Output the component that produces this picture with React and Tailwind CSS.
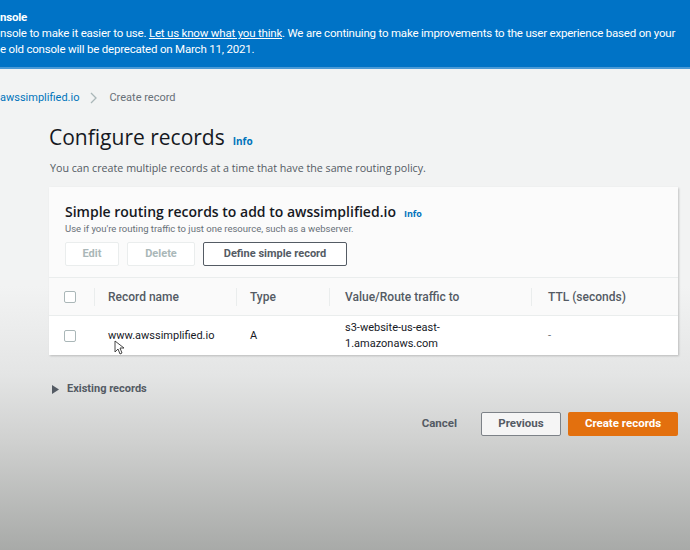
import React from "react";

function Checkbox() {
  return <div className="h-[12px] w-[12px] rounded-[2px] border border-[#aab7b8] bg-white" />;
}

export default function App() {
  return (
    <div className="relative h-[550px] w-[690px] overflow-hidden bg-[linear-gradient(to_bottom,#f2f3f3_0%,#f2f3f3_52%,#e4e5e5_68%,#d0d1d0_80%,#a8aaa8_100%)] font-['Open_Sans',sans-serif] text-[#16191f]">
      {/* Banner */}
      <div className="h-[69px] border-b-2 border-[#4a9ad6] bg-[#0073c6] pt-[9px] font-['Roboto',sans-serif] text-[11.5px] leading-[16px] tracking-[-0.2px] text-white">
        <div className="font-bold">nsole</div>
        <div className="whitespace-nowrap">
          nsole to make it easier to use. <span className="underline">Let us know what you think</span>. We are continuing to make improvements to the user experience based on your
        </div>
        <div className="whitespace-nowrap">e old console will be deprecated on March 11, 2021.</div>
      </div>

      {/* Breadcrumb */}
      <div className="mt-[21px] flex items-center font-['Roboto',sans-serif] text-[11px] leading-[16px]">
        <span className="text-[#0073bb]">awssimplified.io</span>
        <svg className="ml-[11px] mr-[12px]" width="7" height="12" viewBox="0 0 7 12" fill="none">
          <path d="M1 1l5 5-5 5" stroke="#aab7b8" strokeWidth="1.3" />
        </svg>
        <span className="text-[#687078]">Create record</span>
      </div>

      <div className="pl-[49px] pr-[12px]">
        {/* Title */}
        <div className="mt-[17px] flex items-baseline">
          <h1 className="text-[21px] leading-[28px] font-normal text-[#16191f]">Configure records</h1>
          <span className="ml-[8px] text-[10px] font-bold text-[#0073bb]">Info</span>
        </div>
        <p className="mt-[9px] pl-[1px] text-[10.7px] leading-[16px] text-[#545b64]">
          You can create multiple records at a time that have the same routing policy.
        </p>

        {/* Card */}
        <div className="mt-[11px] bg-[#fbfbfb] shadow-[1px_1px_2px_rgba(0,0,0,0.2)]">
          <div className="px-[16px] pt-[15px]">
            <div className="flex items-baseline">
              <span className="text-[14px] font-semibold leading-[20px]">Simple routing records to add to awssimplified.io</span>
              <span className="ml-[8px] text-[9px] font-bold text-[#0073bb]">Info</span>
            </div>
            <div className="font-['Roboto',sans-serif] text-[9.5px] leading-[14px] text-[#687078]">
              Use if you're routing traffic to just one resource, such as a webserver.
            </div>
            <div className="mt-[6px] flex gap-[8px] font-['Roboto',sans-serif] text-[11px] font-bold">
              <div className="flex h-[24px] w-[54px] items-center justify-center rounded-[2px] border border-[#eaeded] bg-white text-[#aab7b8]">Edit</div>
              <div className="flex h-[24px] w-[68px] items-center justify-center rounded-[2px] border border-[#eaeded] bg-white text-[#aab7b8]">Delete</div>
              <div className="flex h-[24px] w-[144px] items-center justify-center rounded-[2px] border border-[#545b64] bg-white text-[#545b64]">Define simple record</div>
            </div>
          </div>

          <div className="mt-[11px] border-t border-[#eaeded]" />
          {/* Header */}
          <div className="relative flex h-[37px] items-center bg-[#fafafa] pt-[1px] font-['Roboto',sans-serif] text-[12px] font-medium text-[#545b64]">
            <div className="flex w-[45px] justify-end pr-[18px]"><Checkbox /></div>
            <div className="flex h-[18px] w-[142px] items-center border-l border-[#eaeded] pl-[13px]">Record name</div>
            <div className="flex h-[18px] w-[93px] items-center border-l border-[#eaeded] pl-[13px]">Type</div>
            <div className="flex h-[18px] w-[202px] items-center border-l border-[#eaeded] pl-[15px]">Value/Route traffic to</div>
            <div className="flex h-[18px] flex-1 items-center border-l border-[#eaeded] pl-[16px]">TTL (seconds)</div>
          </div>
          {/* Row */}
          <div className="relative flex h-[40px] items-center border-t border-[#eaeded] bg-white font-['Roboto',sans-serif] text-[11px] leading-[16px] text-[#16191f]">
            <div className="flex w-[45px] justify-end pr-[18px]"><Checkbox /></div>
            <div className="w-[142px] pl-[14px]">www.awssimplified.io</div>
            <div className="w-[93px] pl-[14px]">A</div>
            <div className="w-[202px] pl-[16px]">
              <div>s3-website-us-east-</div>
              <div>1.amazonaws.com</div>
            </div>
            <div className="flex-1 pl-[17px] text-[#687078]">-</div>
            <svg className="absolute left-[65px] top-[24px]" width="10" height="15" viewBox="0 0 10 15">
              <path d="M1 1v11l3-3 2 5 2-1-2-5h4z" fill="white" stroke="#333" strokeWidth="0.9" strokeLinejoin="round" />
            </svg>
          </div>
        </div>

        {/* Existing records */}
        <div className="mt-[26px] flex items-center pl-[3px] font-['Roboto',sans-serif] text-[11px] font-bold text-[#545b64]">
          <svg width="7" height="9" viewBox="0 0 7 9"><path d="M0 0l7 4.5L0 9z" fill="#545b64" /></svg>
          <span className="ml-[8px]">Existing records</span>
        </div>

        {/* Footer buttons */}
        <div className="mt-[14px] flex items-center justify-end font-['Roboto',sans-serif] text-[11.5px] font-bold">
          <span className="mr-[24px] text-[#545b64]">Cancel</span>
          <div className="flex h-[24px] w-[80px] items-center justify-center rounded-[2px] border border-[#7d8288] bg-[#f5f5f5] text-[#545b64]">Previous</div>
          <div className="ml-[7px] flex h-[24px] w-[110px] items-center justify-center rounded-[2px] bg-[#e3700e] text-white">Create records</div>
        </div>
      </div>
    </div>
  );
}
